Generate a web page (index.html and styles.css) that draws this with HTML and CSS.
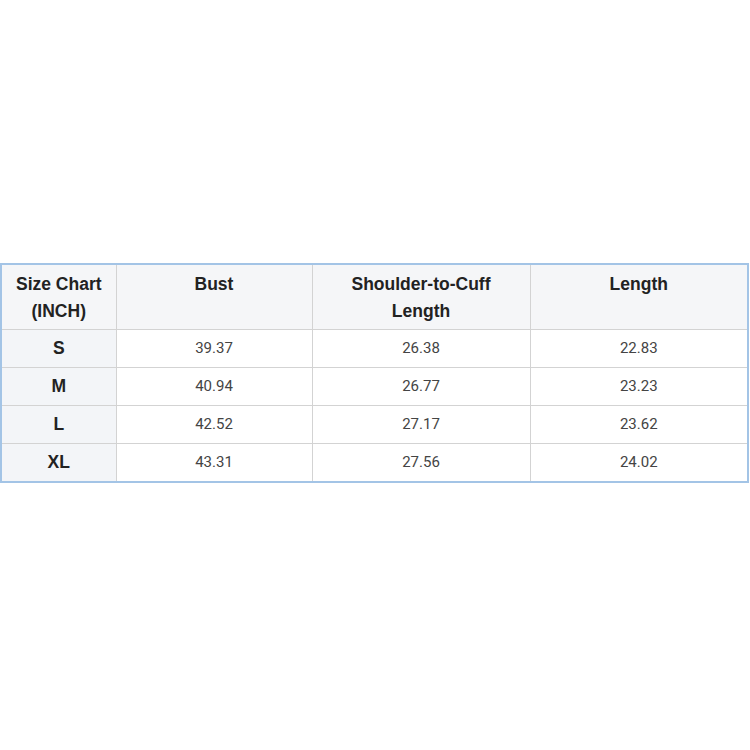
FILE: index.html
```html
<!DOCTYPE html>
<html>
<head>
<meta charset="utf-8">
<link rel="stylesheet" href="styles.css">
</head>
<body>
<div class="page">
<table class="chart">
  <colgroup>
    <col class="c1"><col class="c2"><col class="c3"><col class="c4">
  </colgroup>
  <thead>
    <tr>
      <th>Size Chart<br>(INCH)</th>
      <th>Bust</th>
      <th>Shoulder-to-Cuff<br>Length</th>
      <th>Length</th>
    </tr>
  </thead>
  <tbody>
    <tr><th>S</th><td>39.37</td><td>26.38</td><td>22.83</td></tr>
    <tr><th>M</th><td>40.94</td><td>26.77</td><td>23.23</td></tr>
    <tr><th>L</th><td>42.52</td><td>27.17</td><td>23.62</td></tr>
    <tr><th>XL</th><td>43.31</td><td>27.56</td><td>24.02</td></tr>
  </tbody>
</table>
</div>
</body>
</html>
```
FILE: styles.css
```css
html, body {
  margin: 0;
  padding: 0;
  background: #ffffff;
}
.page {
  width: 750px;
  height: 750px;
  padding-top: 263px;
  box-sizing: border-box;
}
.chart {
  width: 747px;
  border-collapse: collapse;
  border: 2px solid #a3c4e6;
  table-layout: fixed;
}
.c1 { width: 115px; }
.c2 { width: 196px; }
.c3 { width: 218px; }
.c4 { width: 218px; }
.chart th, .chart td {
  border: 1px solid #d3d3d3;
  text-align: center;
  padding: 0;
}
.chart thead th {
  height: 65px;
  vertical-align: top;
  padding-top: 6px;
  box-sizing: border-box;
  background: #f5f6f8;
  font-family: "Liberation Sans", Arial, sans-serif;
  font-weight: bold;
  font-size: 17.5px;
  line-height: 27px;
  color: #222;
}
.chart tbody th {
  height: 37px;
  background: #f3f5f8;
  font-family: "Liberation Sans", Arial, sans-serif;
  font-weight: bold;
  font-size: 17.5px;
  color: #222;
}
.chart tbody td {
  height: 37px;
  background: #ffffff;
  font-family: Roboto, sans-serif;
  font-size: 15px;
  color: #444;
}
```
